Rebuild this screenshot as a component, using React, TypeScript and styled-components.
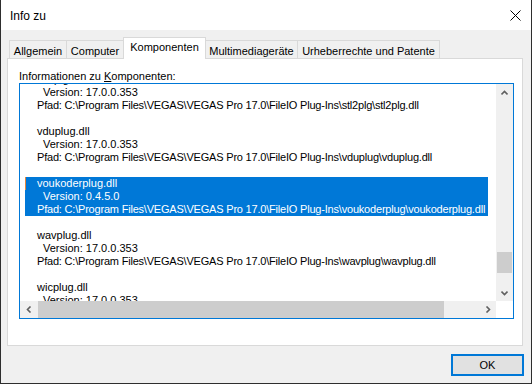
import React from "react";
import styled, { createGlobalStyle } from "styled-components";

const GlobalStyle = createGlobalStyle`
  html, body {
    margin: 0;
    padding: 0;
    background: #ffffff;
  }
  body {
    font-family: "Liberation Sans", Arial, sans-serif;
    font-size: 11px;
    color: #000;
  }
`;

const Window = styled.div`
  width: 532px;
  height: 384px;
  box-sizing: border-box;
  border: 1px solid #2e2e2e;
  border-top: none;
  background: #f0f0f0;
  display: flex;
  flex-direction: column;
`;

const TitleBar = styled.div`
  height: 30px;
  flex: none;
  background: #ffffff;
  display: flex;
  align-items: center;
  justify-content: space-between;
  padding-left: 9px;
`;

const Title = styled.span`
  font-size: 12px;
  line-height: 14px;
  padding-top: 1px;
`;

const CloseButton = styled.div`
  width: 32px;
  height: 30px;
  display: flex;
  align-items: center;
  justify-content: center;
`;

const Body = styled.div`
  flex: 1;
  display: flex;
  flex-direction: column;
  padding: 7px 8px 0 6px;
`;

const TabStrip = styled.div`
  height: 22px;
  display: flex;
  align-items: flex-end;
  padding-left: 2px;
  margin-bottom: -1px;
  position: relative;
  z-index: 1;
`;

const Tab = styled.div<{ $w: number; $active?: boolean }>`
  box-sizing: border-box;
  width: ${(p) => p.$w}px;
  height: ${(p) => (p.$active ? 22 : 18)}px;
  margin-bottom: ${(p) => (p.$active ? 0 : 1)}px;
  margin-left: -1px;
  &:first-child {
    margin-left: 0;
  }
  border: 1px solid #d9d9d9;
  border-bottom: none;
  background: ${(p) => (p.$active ? "#ffffff" : "#f0f0f0")};
  display: flex;
  align-items: center;
  justify-content: center;
  padding-bottom: ${(p) => (p.$active ? 3 : 0)}px;
  padding-top: ${(p) => (p.$active ? 0 : 2)}px;
  white-space: nowrap;
  position: relative;
  z-index: ${(p) => (p.$active ? 2 : 1)};
`;

const Panel = styled.div`
  height: 288px;
  box-sizing: border-box;
  border: 1px solid #d9d9d9;
  background: #ffffff;
  padding: 0 8px 0 11px;
  display: flex;
  flex-direction: column;
`;

const Label = styled.div`
  line-height: 13px;
  padding-top: 11px;
`;

const AccessKey = styled.span`
  text-decoration: underline;
`;

const ListBox = styled.div`
  margin-top: 0px;
  height: 236px;
  box-sizing: border-box;
  border: 1px solid #0078d7;
  display: grid;
  grid-template-columns: 1fr 17px;
  grid-template-rows: 1fr 17px;
  overflow: hidden;
`;

const ListView = styled.div`
  overflow: hidden;
  padding-top: 1px;
  background: #ffffff;
`;

const ListScroll = styled.div<{ $offset: number }>`
  margin-top: ${(p) => -p.$offset}px;
  padding-left: 5px;
`;

const Group = styled.div<{ $selected?: boolean }>`
  width: max-content;
  margin-bottom: 13px;
  padding-right: 3px;
  background: ${(p) => (p.$selected ? "#0078d7" : "transparent")};
  color: ${(p) => (p.$selected ? "#ffffff" : "#000000")};
`;

const Line = styled.div<{ $indent: number; $tight?: boolean; $caret?: boolean }>`
  height: 13px;
  line-height: 13px;
  white-space: pre;
  padding-left: ${(p) => p.$indent}px;
  letter-spacing: ${(p) => (p.$tight ? "-0.2px" : "0")};
  box-shadow: ${(p) => (p.$caret ? "inset 1px 0 0 #e8873c" : "none")};
`;

const VScroll = styled.div`
  background: #f0f0f0;
  display: flex;
  flex-direction: column;
`;

const HScroll = styled.div`
  background: #f0f0f0;
  display: flex;
`;

const Corner = styled.div`
  background: #ffffff;
`;

const ArrowBox = styled.div`
  width: 17px;
  height: 17px;
  flex: none;
  display: flex;
  align-items: center;
  justify-content: center;
`;

const VTrack = styled.div`
  flex: 1;
  display: flex;
  flex-direction: column;
  align-items: center;
`;

const VThumb = styled.div<{ $top: number; $size: number }>`
  width: 15px;
  margin-top: ${(p) => p.$top}px;
  height: ${(p) => p.$size}px;
  background: #cdcdcd;
`;

const HTrack = styled.div`
  flex: 1;
  display: flex;
  padding-left: 1px;
`;

const HThumb = styled.div<{ $size: number }>`
  width: ${(p) => p.$size}px;
  height: 17px;
  background: #cdcdcd;
`;

const Footer = styled.div`
  display: flex;
  justify-content: flex-end;
  padding-top: 8px;
  margin-right: -1px;
`;

const OkButton = styled.div`
  width: 73px;
  height: 22px;
  box-sizing: border-box;
  border: 2px solid #0078d7;
  background: #e1e1e1;
  display: flex;
  align-items: center;
  justify-content: center;
`;

const Chevron = ({ dir }: { dir: "up" | "down" | "left" | "right" }) => {
  const pts = {
    up: "0.5,4.5 3.5,1.5 6.5,4.5",
    down: "0.5,1.5 3.5,4.5 6.5,1.5",
    left: "4.5,0.5 1.5,3.5 4.5,6.5",
    right: "1.5,0.5 4.5,3.5 1.5,6.5",
  }[dir];
  const vertical = dir === "up" || dir === "down";
  return (
    <svg width={vertical ? 7 : 6} height={vertical ? 6 : 7} viewBox={vertical ? "0 0 7 6" : "0 0 6 7"}>
      <polyline points={pts} fill="none" stroke="#606060" strokeWidth="1.6" />
    </svg>
  );
};

const base = "C:\\Program Files\\VEGAS\\VEGAS Pro 17.0\\FileIO Plug-Ins\\";

const plugins = [
  { name: "stl2plg", version: "17.0.0.353" },
  { name: "vduplug", version: "17.0.0.353" },
  { name: "voukoderplug", version: "0.4.5.0", selected: true },
  { name: "wavplug", version: "17.0.0.353" },
  { name: "wicplug", version: "17.0.0.353" },
];

const tabs = [
  { label: "Allgemein", w: 58 },
  { label: "Computer", w: 58 },
  { label: "Komponenten", w: 83, active: true },
  { label: "Multimediageräte", w: 93 },
  { label: "Urheberrechte und Patente", w: 143 },
];

export default function App() {
  return (
    <>
      <GlobalStyle />
      <Window>
        <TitleBar>
          <Title>Info zu</Title>
          <CloseButton>
            <svg width="11" height="11" viewBox="0 0 11 11">
              <path d="M0.5 0.5 L10.5 10.5 M10.5 0.5 L0.5 10.5" stroke="#000" strokeWidth="1" />
            </svg>
          </CloseButton>
        </TitleBar>
        <Body>
          <TabStrip>
            {tabs.map((t) => (
              <Tab key={t.label} $w={t.w} $active={t.active}>
                {t.label}
              </Tab>
            ))}
          </TabStrip>
          <Panel>
            <Label>
              Informationen zu <AccessKey>K</AccessKey>omponenten:
            </Label>
            <ListBox>
              <ListView>
                <ListScroll $offset={12}>
                  {plugins.map((p) => (
                    <Group key={p.name} $selected={p.selected}>
                      <Line $indent={12} $caret={p.selected}>{p.name}.dll</Line>
                      <Line $indent={18}>Version: {p.version}</Line>
                      <Line $indent={12} $tight>
                        Pfad: {base}
                        {p.name}\{p.name}.dll
                      </Line>
                    </Group>
                  ))}
                </ListScroll>
              </ListView>
              <VScroll>
                <ArrowBox>
                  <Chevron dir="up" />
                </ArrowBox>
                <VTrack>
                  <VThumb $top={151} $size={21} />
                </VTrack>
                <ArrowBox>
                  <Chevron dir="down" />
                </ArrowBox>
              </VScroll>
              <HScroll>
                <ArrowBox>
                  <Chevron dir="left" />
                </ArrowBox>
                <HTrack>
                  <HThumb $size={406} />
                </HTrack>
                <ArrowBox>
                  <Chevron dir="right" />
                </ArrowBox>
              </HScroll>
              <Corner />
            </ListBox>
          </Panel>
          <Footer>
            <OkButton>OK</OkButton>
          </Footer>
        </Body>
      </Window>
    </>
  );
}
